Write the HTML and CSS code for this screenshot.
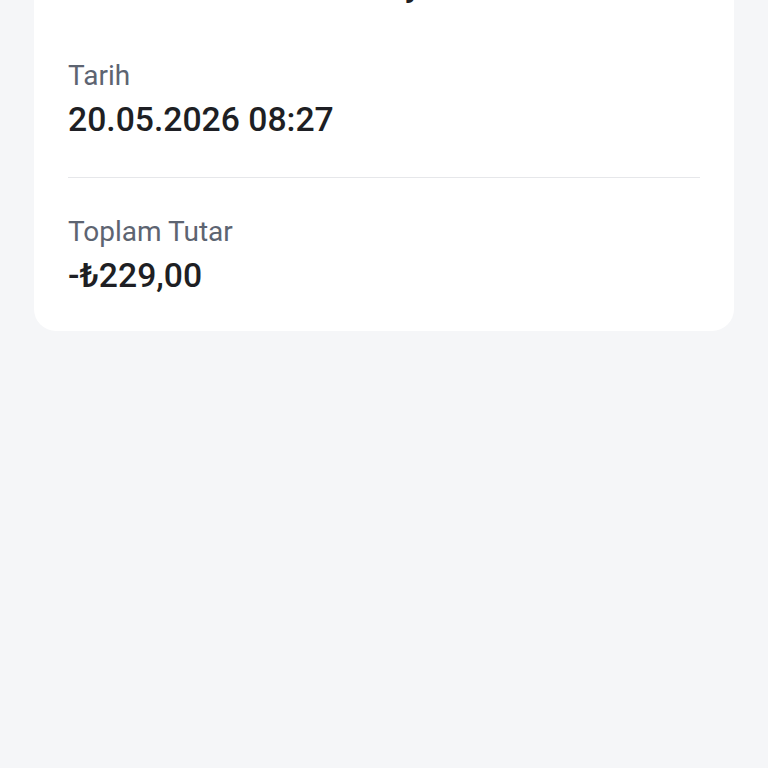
FILE: index.html
```html
<!DOCTYPE html>
<html lang="tr">
<head>
    <meta charset="UTF-8">
    <meta name="viewport" content="width=device-width, initial-scale=1.0">
    <title>Trendyol</title>
    <link rel="stylesheet" href="styles.css">
</head>
<body>
    <div class="page">
        <div class="card">
            <h2 class="card-title">Trendyol</h2>

            <div class="detail-row">
                <div class="detail-label">Tarih</div>
                <div class="detail-value">20.05.2026 08:27</div>
            </div>

            <div class="detail-row">
                <div class="detail-label">Toplam Tutar</div>
                <div class="detail-value">-₺229,00</div>
            </div>
        </div>
    </div>
</body>
</html>
```

FILE: styles.css
```css
body {
    font-family: Roboto, "Noto Sans", Arial, sans-serif;
    background-color: #f5f6f8;
    margin: 0;
    padding: 0;
}

.page {
    padding: 0 34px;
}

.card {
    background-color: #ffffff;
    border-radius: 0 0 22px 22px;
    padding: 0 34px;
    margin-top: -80px;
}

.card-title {
    margin: 0;
    height: 104px;
    line-height: 68px;
    font-size: 32px;
    font-weight: 700;
    color: #1e1f24;
    text-align: center;
    padding-top: 32px;
    box-sizing: border-box;
}

.detail-row {
    padding: 34px 0 35px;
}

.detail-row + .detail-row {
    border-top: 1px solid #e6e7ea;
    padding-top: 36px;
    padding-bottom: 33px;
}

.detail-label {
    font-size: 28px;
    line-height: 36px;
    color: #5d6471;
    margin-bottom: 4px;
}

.detail-value {
    font-size: 33.7px;
    line-height: 44px;
    font-weight: 500;
    color: #1e1f24;
}
```
